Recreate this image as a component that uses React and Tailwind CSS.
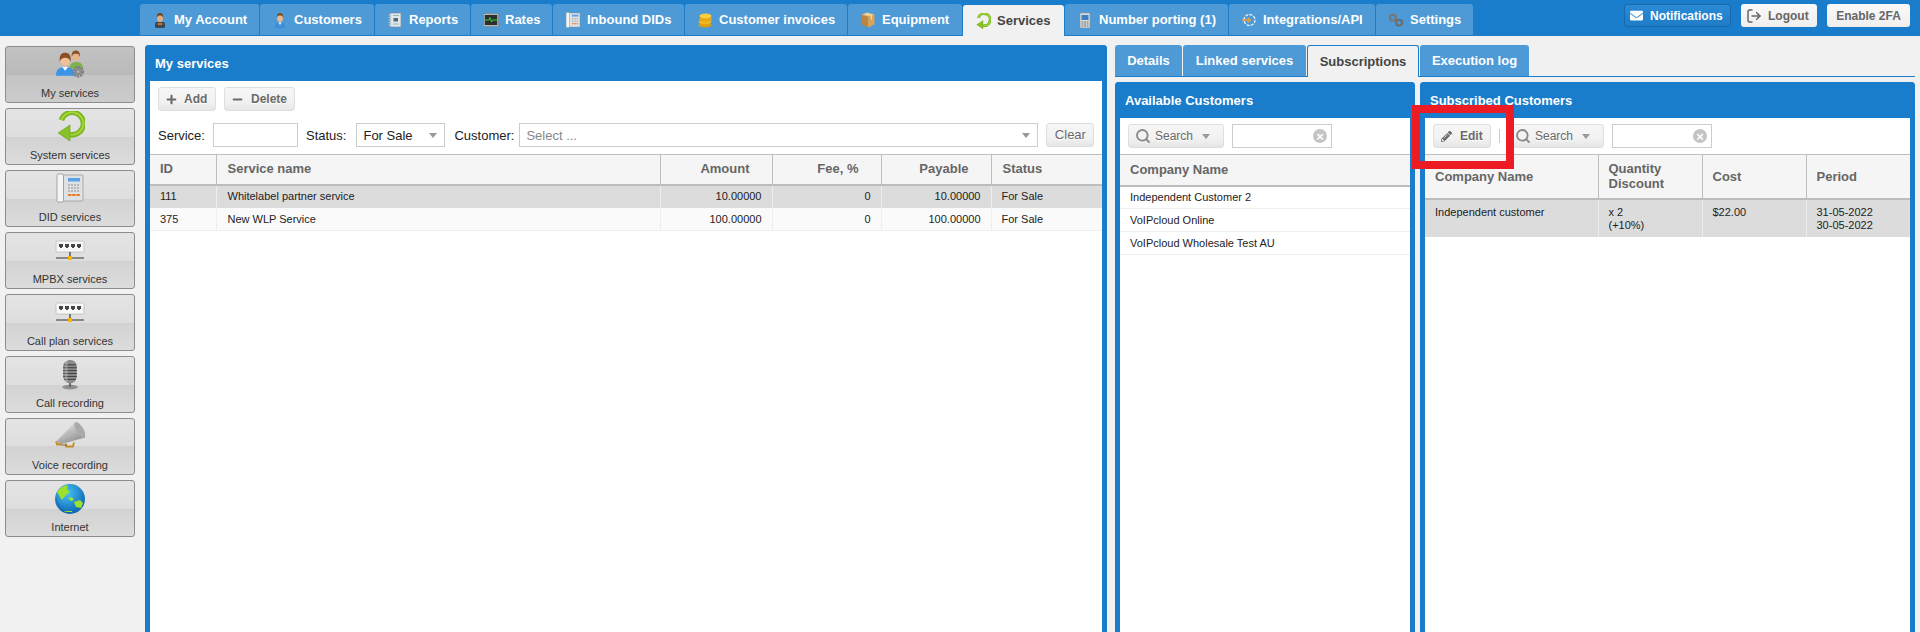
import { Search, LogOut } from "lucide-react";
import { FaPencilAlt, FaEnvelope, FaPlus, FaMinus } from "react-icons/fa";

// ---- small drawn icons (tab bar + left menu) ----

function Person({ className, shirt = "#3f8fd8", hair = "#7a4a1e" }) {
  return (
    <svg viewBox="0 0 16 16" className={className}>
      <path d="M2.5 16c0-4 2-5.5 5.5-5.5s5.5 1.500 5.500 5.500z" fill={shirt} />
      <path d="M6.500 10.500h3L8 13z" fill="#fff" />
      <ellipse cx="8" cy="6" rx="3" ry="4" fill="#e9b88e" />
      <path d="M4.800 6C4.500 2.500 6 1 8 1s3.500 1.500 3.200 5c-.5-2-1.700-2.500-3.200-2.500S5.300 4 4.800 6z" fill={hair} />
    </svg>
  );
}

function Account({ className }) {
  return (
    <svg viewBox="0 0 16 16" className={className}>
      <rect x="3" y="10" width="10" height="6" rx="1.500" fill="#3b4a57" />
      <rect x="6" y="11" width="4" height="2" fill="#d9702a" />
      <ellipse cx="8" cy="6" rx="3" ry="4" fill="#e3ad80" />
      <path d="M4.800 6C4.500 2.500 6 1 8 1s3.500 1.500 3.200 5c-.5-2-1.700-2.500-3.200-2.500S5.300 4 4.800 6z" fill="#6d4218" />
    </svg>
  );
}

function Notebook({ className }) {
  return (
    <svg viewBox="0 0 16 16" className={className}>
      <rect x="3" y="1" width="11" height="14" fill="#dfe8ef" stroke="#7d8d99" strokeWidth=".7" />
      <rect x="6.500" y="6" width="4.500" height="3.500" fill="#55666f" />
      <path d="M6 3.500h6M6 12h6" stroke="#8aa" strokeWidth=".8" />
      <path d="M1.500 3h3M1.500 5.500h3M1.500 8h3M1.500 10.500h3M1.500 13h3" stroke="#ccc" strokeWidth=".9" />
    </svg>
  );
}

function Monitor({ className }) {
  return (
    <svg viewBox="0 0 16 16" className={className}>
      <rect x=".5" y="1.500" width="15" height="13" fill="#b5b9ba" stroke="#777" strokeWidth=".5" />
      <rect x="1.800" y="3" width="12.400" height="10" fill="#2c2f2e" />
      <path d="M2 8h4l1-2.500L8.500 10l1-2h4.500" fill="none" stroke="#3ddc4a" strokeWidth=".9" />
    </svg>
  );
}

function DeskPhone({ className }) {
  return (
    <svg viewBox="0 0 28 30" className={className}>
      <rect x="7" y="2" width="20" height="26" rx="1" fill="#dfe2e4" stroke="#8f9497" strokeWidth=".7" />
      <rect x="1" y="1" width="6.500" height="28" rx="1.500" fill="#f4f5f5" stroke="#8f9497" strokeWidth=".8" />
      <rect x="12" y="5" width="12" height="3.500" fill="#5ea2e6" />
      <path d="M12 12h12M12 15h12M12 18h12" stroke="#a7aaac" strokeWidth="1.500" strokeDasharray="2 1" />
      <path d="M12 22h12" stroke="#e87c2c" strokeWidth="2" strokeDasharray="3.500 .7" />
    </svg>
  );
}

function Coins({ className }) {
  return (
    <svg viewBox="0 0 16 16" className={className}>
      <ellipse cx="8" cy="13" rx="6.500" ry="2.500" fill="#dc9d10" />
      <ellipse cx="8" cy="10" rx="6.500" ry="2.500" fill="#f0b71c" />
      <ellipse cx="8.500" cy="7" rx="6.500" ry="2.500" fill="#e6a812" />
      <ellipse cx="8.500" cy="4" rx="6" ry="2.500" fill="#fbcf3a" />
    </svg>
  );
}

function Box({ className }) {
  return (
    <svg viewBox="0 0 16 16" className={className}>
      <path d="M8 4L1.500 2.500v10L8 15.500z" fill="#b9853f" />
      <path d="M8 4l6.500-1.500v10L8 15.500z" fill="#d6a45c" />
      <path d="M1.500 2.500L8 .5l6.500 2L8 4.500z" fill="#e9c182" />
      <path d="M5 1.500L11.500 3.500v4" stroke="#f2dcb0" strokeWidth="1.200" fill="none" />
    </svg>
  );
}

function GreenArrow({ className }) {
  return (
    <svg viewBox="0 0 28 28" className={className}>
      <path d="M6 8.500A10.500 10.500 0 1 1 14 22" fill="none" stroke="#7ab51d" strokeWidth="5" />
      <path d="M6 8.500A10.500 10.500 0 1 1 14 22" fill="none" stroke="#a4d33c" strokeWidth="2" />
      <path d="M3 20.500L14 13v15z" fill="#86c126" stroke="#6aa015" strokeWidth=".6" />
    </svg>
  );
}

function Mobile({ className }) {
  return (
    <svg viewBox="0 0 16 16" className={className}>
      <rect x="3" y="1" width="10" height="15" rx="1" fill="#d9dcdc" stroke="#8d9191" strokeWidth=".6" />
      <rect x="4.500" y="3" width="7" height="5" fill="#3f7fc4" />
      <path d="M4.500 10h7M4.500 12h7M4.500 14h7" stroke="#777" strokeWidth="1.100" strokeDasharray="2 .6" />
    </svg>
  );
}

function GearArrow({ className }) {
  return (
    <svg viewBox="0 0 16 16" className={className}>
      <circle cx="8.500" cy="8" r="5.500" fill="none" stroke="#e8f1f8" strokeWidth="1.300" strokeDasharray="3 1.200" />
      <path d="M1 8h8M6.500 5.500L9.500 8l-3 2.500" fill="none" stroke="#e2a14a" strokeWidth="1.400" />
    </svg>
  );
}

function Gears({ className }) {
  return (
    <svg viewBox="0 0 18 16" className={className}>
      <circle cx="5.500" cy="5.500" r="3.300" fill="none" stroke="#777" strokeWidth="2.400" />
      <circle cx="12.500" cy="11" r="3.300" fill="none" stroke="#6c6c6c" strokeWidth="2.400" />
    </svg>
  );
}

function TwoUsers({ className }) {
  return (
    <svg viewBox="0 0 32 30" className={className}>
      <path d="M15 20c0-5 3-7 7-7s7 2 7 7z" fill="#7fb04a" />
      <ellipse cx="21.500" cy="7" rx="4" ry="5" fill="#e7b48a" />
      <path d="M17.200 8C16.800 3 19 1 21.500 1s4.700 2 4.300 7c-.6-3-2.400-3.500-4.300-3.500S17.800 5 17.200 8z" fill="#8b4d22" />
      <path d="M1 27c0-7 4-9 9.500-9s9.500 2 9.500 9z" fill="#3d93e6" />
      <path d="M7.500 18h6L10.500 22z" fill="#fff" />
      <ellipse cx="10.500" cy="11" rx="5" ry="6" fill="#f0c098" />
      <path d="M5 13C4 6 7 3.500 10.500 3.500S17 6 16 13c-.7-3.500-3-4.500-5.500-4.500S5.700 9.500 5 13z" fill="#8b4d22" />
      <circle cx="24" cy="23" r="4.300" fill="none" stroke="#7d7f81" strokeWidth="3.400" strokeDasharray="2 .8" />
      <circle cx="24" cy="23" r="2.400" fill="none" stroke="#8a8c8e" strokeWidth="2.400" />
    </svg>
  );
}

function NetSwitch({ className }) {
  return (
    <svg viewBox="0 0 30 22" className={className}>
      <rect x="1" y="1" width="28" height="11" rx="1" fill="#f7f7f7" stroke="#bdbdbd" strokeWidth=".8" />
      <path d="M4 4h4v3H7v1H5V7H4zM10 4h4v3h-1v1h-2V7h-1zM16 4h4v3h-1v1h-2V7h-1zM22 4h4v3h-1v1h-2V7h-1z" fill="#444" />
      <path d="M15 12v6M1 18h28" stroke="#333" strokeWidth="1.200" />
      <rect x="13" y="16" width="4" height="4" fill="#f4b400" />
    </svg>
  );
}

function Mic({ className }) {
  return (
    <svg viewBox="0 0 18 32" className={className}>
      <ellipse cx="9" cy="29" rx="8" ry="2.500" fill="#8f8f8f" />
      <rect x="8" y="24" width="2" height="5" fill="#666" />
      <rect x="2" y="1" width="14" height="24" rx="6.500" fill="#8b8b8b" />
      <path d="M3 6h12M2 9h14M2 12h14M2 15h14M2 18h14M3 21h12" stroke="#3c3c3c" strokeWidth="1" />
      <rect x="3.500" y="1" width="3" height="23" fill="#fff" opacity=".25" />
    </svg>
  );
}

function Megaphone({ className }) {
  return (
    <svg viewBox="0 0 30 26" className={className}>
      <defs>
        <linearGradient id="cone" x1="0" y1="0" x2=".6" y2="1">
          <stop offset="0" stopColor="#f2f2f2" />
          <stop offset="1" stopColor="#8e8e8e" />
        </linearGradient>
      </defs>
      <path d="M1 20L20 1l10 15L5 23z" fill="url(#cone)" />
      <ellipse cx="25" cy="8.500" rx="9" ry="3.500" transform="rotate(58 25 8.500)" fill="#a9a9a9" />
      <path d="M1 20l1 3h5M11 22v3h7l1-4" fill="none" stroke="#c58b2a" strokeWidth="1.800" />
      <path d="M7 23.500h5" stroke="#8a5f18" strokeWidth="1" />
    </svg>
  );
}

function Globe({ className }) {
  return (
    <svg viewBox="0 0 32 32" className={className}>
      <defs>
        <radialGradient id="sea" cx="40%" cy="30%" r="75%">
          <stop offset="0" stopColor="#45c3f5" />
          <stop offset="1" stopColor="#0c5fae" />
        </radialGradient>
      </defs>
      <circle cx="16" cy="16" r="15" fill="url(#sea)" />
      <path d="M3 9c3-4 7-7 11-7l-1 4 3 3-4 3-4 5-2-3zM14 15l4-1 2 3-3 1zM20 19l6-2 3 3-2 5-5-1zM10 28h8v1h-8z" fill="#9be12e" />
      <path d="M2 15c1 8 7 15 14 15" fill="none" stroke="#0a4a8c" strokeWidth="1" opacity=".5" />
    </svg>
  );
}

function Caret({ className = "" }) {
  return <span className={`w-0 h-0 border-x-[4px] border-x-transparent border-t-[5px] border-t-[#999] ${className}`} />;
}

const tabs = [
  { label: "My Account", w: "w-[119px]", Icon: Account },
  { label: "Customers", w: "w-[114px]", Icon: Person },
  { label: "Reports", w: "w-[95px]", Icon: Notebook },
  { label: "Rates", w: "w-[81px]", Icon: Monitor },
  { label: "Inbound DIDs", w: "w-[131px]", Icon: DeskPhone },
  { label: "Customer invoices", w: "w-[162px]", Icon: Coins },
  { label: "Equipment", w: "w-[114px]", Icon: Box },
  { label: "Services", w: "w-[101px]", Icon: GreenArrow, active: true },
  { label: "Number porting (1)", w: "w-[163px]", Icon: Mobile },
  { label: "Integrations/API", w: "w-[146px]", Icon: GearArrow },
  { label: "Settings", w: "w-[97px]", Icon: Gears },
];

const menu = [
  { label: "My services", icon: <TwoUsers className="w-[31px] h-[30px]" />, active: true },
  { label: "System services", icon: <GreenArrow className="w-[30px] h-[30px]" /> },
  { label: "DID services", icon: <DeskPhone className="w-[28px] h-[30px]" /> },
  { label: "MPBX services", icon: <NetSwitch className="w-[30px] h-[22px] mt-[5px]" /> },
  { label: "Call plan services", icon: <NetSwitch className="w-[30px] h-[22px] mt-[5px]" /> },
  { label: "Call recording", icon: <Mic className="w-[18px] h-[31px]" /> },
  { label: "Voice recording", icon: <Megaphone className="w-[30px] h-[27px]" /> },
  { label: "Internet", icon: <Globe className="w-[32px] h-[32px]" /> },
];

const btn =
  "flex items-center h-6 border border-[#dedede] rounded-[3px] bg-[linear-gradient(#f6f6f6,#f2f2f2_60%,#e6e6e6)] text-[12px] font-bold text-[#6a6a6a] [text-shadow:0_1px_0_#fff]";
const thBase = "border-r border-[#bdbdbd] last:border-r-0 text-[13px] font-bold text-[#666] text-left pl-[10px] align-middle";
const th = `h-[30px] pb-[2px] ${thBase}`;
const thNum = "h-[30px] pb-[2px] border-r border-[#bdbdbd] text-[13px] font-bold text-[#666] text-right pr-[22px] align-middle";
const td = "border-r border-[#eeeeee] last:border-r-0 pl-[10px] align-middle";
const tdNum = "border-r border-[#eeeeee] pr-[10px] text-right align-middle";

function Panel({ title, className = "", children }) {
  return (
    <div className={`flex flex-col rounded-t-[4px] border-x-[5px] border-t-[5px] border-[#197dcb] bg-[#197dcb] ${className}`}>
      <div className="h-[31px] text-[13px] font-bold text-white pl-[5px] pt-[5px] leading-[18px]">{title}</div>
      <div className="flex-1 bg-white">{children}</div>
    </div>
  );
}

function SearchBox() {
  return (
    <>
      <button className={`${btn} w-[96px] pl-[6px]`}>
        <Search className="w-4 h-4 text-[#888] mr-[4px]" strokeWidth={2.750} />
        <span className="font-normal">Search</span>
        <Caret className="ml-[9px]" />
      </button>
      <div className="flex items-center justify-end w-[100px] h-6 ml-2 border border-[#cccccc] pr-[4px]">
        <span className="flex items-center justify-center w-[14px] h-[14px] rounded-full bg-[#c4c4c4] text-white text-[13px] leading-none font-bold">×</span>
      </div>
    </>
  );
}

export default function App() {
  return (
    <div className="relative w-[1920px] h-[632px] overflow-hidden bg-[#f1f1f1] font-['Liberation_Sans',Arial,sans-serif]">
      {/* トップのタブ */}
      <div className="flex h-9 bg-[#197dcb] pl-[140px] pt-1">
        {tabs.map(({ label, w, Icon, active }) => (
          <div
            key={label}
            className={`flex items-center shrink-0 pl-3 mr-px rounded-t-[3px] text-[13px] font-bold ${w} ${
              active ? "h-[31px] mt-px bg-[#f1f1f1] text-[#444]" : "h-[31px] bg-[#4d9ad6] text-white"
            }`}
          >
            <Icon className="w-4 h-4 mr-[6px] shrink-0" />
            {label}
          </div>
        ))}
        <div className="ml-auto flex gap-[10px] pr-[10px]">
          <button className="flex items-center gap-[6px] w-[107px] h-[23px] pl-[4px] rounded-[3px] border border-[#1769ab] bg-[linear-gradient(#2b8ad6,#1f7dc8)] text-white text-[12px] font-bold">
            <FaEnvelope className="w-[15px] h-[13px]" />
            Notifications
          </button>
          <button className="flex items-center gap-[6px] w-[76px] h-[23px] pl-[5px] rounded-[3px] bg-[linear-gradient(#fafafa,#eeeeee)] text-[#666] text-[12px] font-bold">
            <LogOut className="w-[16px] h-[16px]" strokeWidth={2.250} />
            Logout
          </button>
          <button className="w-[83px] h-[23px] rounded-[3px] bg-[linear-gradient(#fafafa,#eeeeee)] text-[#666] text-[12px] font-bold">
            Enable 2FA
          </button>
        </div>
      </div>

      <div className="flex h-[596px] pt-[9px]">
        {/* 左メニュー */}
        <div className="flex flex-col gap-[5px] w-[145px] shrink-0 pl-[5px] pt-px">
          {menu.map((m) => (
            <div
              key={m.label}
              className={`flex flex-col items-center w-[130px] h-[57px] shrink-0 rounded-[3px] border border-[#8c8c8c] ${
                m.active
                  ? "bg-[linear-gradient(#c2c2c2,#bababa_50%,#c4c4c4_50%,#cccccc)]"
                  : "bg-[linear-gradient(#e4e4e4,#dedede_50%,#d2d2d2_50%,#dcdcdc)]"
              }`}
            >
              <div className="flex items-start justify-center h-[39px] pt-[2px] shrink-0">{m.icon}</div>
              <div className="text-[11px] leading-[14px] text-[#333]">{m.label}</div>
            </div>
          ))}
        </div>

        {/* My services */}
        <Panel title="My services" className="w-[962px] shrink-0">
          <div className="flex gap-2 pl-2 pt-[6px]">
            <button className={`${btn} w-[58px] pl-[7px]`}>
              <FaPlus className="w-[11px] h-[11px] mr-[7px]" />
              Add
            </button>
            <button className={`${btn} w-[71px] pl-[7px]`}>
              <FaMinus className="w-[11px] h-[11px] mr-[8px]" />
              Delete
            </button>
          </div>
          <div className="flex items-center h-6 mt-3 pl-2 text-[13px] text-[#222]">
            <span className="pt-[2px]">Service:</span>
            <div className="w-[85px] h-6 ml-[8px] border border-[#cccccc]" />
            <span className="ml-2 pt-[2px]">Status:</span>
            <div className="flex items-center justify-between w-[89px] h-6 ml-[10px] pl-[6px] pr-[7px] border border-[#cccccc]">
              <span className="pt-[2px]">For Sale</span>
              <Caret />
            </div>
            <span className="ml-[9px] pt-[2px]">Customer:</span>
            <div className="flex items-center justify-between w-[519px] h-6 ml-[5px] pl-[6px] pr-[7px] border border-[#cccccc] text-[#888]">
              <span className="pt-[2px]">Select ...</span>
              <Caret />
            </div>
            <button className={`${btn} justify-center w-[48px] ml-2 font-normal text-[13px]`}>Clear</button>
          </div>
          <table className="w-full table-fixed mt-[7px] text-[11px] text-[#222]">
            <colgroup>
              <col className="w-[66px]" />
              <col className="w-[444px]" />
              <col className="w-[112px]" />
              <col className="w-[109px]" />
              <col className="w-[110px]" />
              <col className="w-[111px]" />
            </colgroup>
            <thead>
              <tr className="bg-[#f5f5f5] border-t border-b-2 border-[#bdbdbd]">
                <th className={th}>ID</th>
                <th className={`${th} pl-[11px]`}>Service name</th>
                <th className={thNum}>Amount</th>
                <th className={thNum}>Fee, %</th>
                <th className={thNum}>Payable</th>
                <th className={`${th} pl-[11px]`}>Status</th>
              </tr>
            </thead>
            <tbody>
              <tr className="h-[23px] bg-[#dcdcdc]">
                <td className={td}>111</td>
                <td className={`${td} pl-[11px]`}>Whitelabel partner service</td>
                <td className={tdNum}>10.00000</td>
                <td className={tdNum}>0</td>
                <td className={tdNum}>10.00000</td>
                <td className={td}>For Sale</td>
              </tr>
              <tr className="h-[23px] bg-[#fafafa] border-b border-[#eeeeee]">
                <td className={td}>375</td>
                <td className={`${td} pl-[11px]`}>New WLP Service</td>
                <td className={tdNum}>100.00000</td>
                <td className={tdNum}>0</td>
                <td className={tdNum}>100.00000</td>
                <td className={td}>For Sale</td>
              </tr>
            </tbody>
          </table>
        </Panel>

        {/* 右側 */}
        <div className="w-[800px] ml-2 shrink-0 flex flex-col">
          <div className="flex h-[32px] border-b border-[#197dcb] text-[13px] font-bold">
            <div className="flex items-center justify-center w-[67px] h-[31px] mr-px rounded-t-[3px] bg-[#4d9ad6] text-white">Details</div>
            <div className="flex items-center justify-center w-[123px] h-[31px] mr-px rounded-t-[3px] bg-[#4d9ad6] text-white">Linked services</div>
            <div className="flex items-center justify-center w-[112px] h-[32px] mr-px rounded-t-[3px] border border-b-0 border-[#197dcb] bg-[#f1f1f1] text-[#444]">Subscriptions</div>
            <div className="flex items-center justify-center w-[109px] h-[31px] rounded-t-[3px] bg-[#4d9ad6] text-white">Execution log</div>
          </div>
          <div className="flex flex-1 gap-[5px] mt-[5px]">
            <Panel title="Available Customers" className="w-[300px] shrink-0">
              <div className="flex items-center h-6 mt-[6px] mb-[6px] pl-2">
                <SearchBox />
              </div>
              <table className="w-full text-[11px] text-[#222]">
                <thead>
                  <tr className="bg-[#f5f5f5] border-t border-b-2 border-[#bdbdbd]">
                    <th className={`h-[31px] pb-[1px] ${thBase}`}>Company Name</th>
                  </tr>
                </thead>
                <tbody>
                  {["Independent Customer 2", "VoIPcloud Online", "VoIPcloud Wholesale Test AU"].map((c) => (
                    <tr key={c} className="h-[23px] border-b border-[#eeeeee]">
                      <td className={td}>{c}</td>
                    </tr>
                  ))}
                </tbody>
              </table>
            </Panel>
            <Panel title="Subscribed Customers" className="w-[495px] shrink-0">
              <div className="flex items-center h-6 mt-[6px] mb-[6px] pl-2">
                <button className={`${btn} w-[58px] pl-[7px] mr-2`}>
                  <FaPencilAlt className="w-[11px] h-[11px] mr-[8px]" />
                  Edit
                </button>
                <span className="w-px h-[14px] bg-[#cccccc] mr-[8px]" />
                <SearchBox />
              </div>
              <table className="w-full table-fixed text-[11px] text-[#222]">
                <colgroup>
                  <col className="w-[173px]" />
                  <col className="w-[104px]" />
                  <col className="w-[104px]" />
                  <col className="w-[104px]" />
                </colgroup>
                <thead>
                  <tr className="bg-[#f5f5f5] border-t border-b-2 border-[#bdbdbd]">
                    <th className={`h-[44px] ${thBase}`}>Company Name</th>
                    <th className={`h-[44px] leading-[15px] ${thBase}`}>Quantity<br />Discount</th>
                    <th className={`h-[44px] ${thBase}`}>Cost</th>
                    <th className={`h-[44px] ${thBase}`}>Period</th>
                  </tr>
                </thead>
                <tbody>
                  <tr className="bg-[#dcdcdc] leading-[13px]">
                    <td className="border-r border-[#eeeeee] pl-[10px] pt-[6px] pb-[5px] align-top">Independent customer</td>
                    <td className="border-r border-[#eeeeee] pl-[10px] pt-[6px] pb-[5px] align-top">x 2<br />(+10%)</td>
                    <td className="border-r border-[#eeeeee] pl-[10px] pt-[6px] pb-[5px] align-top">$22.00</td>
                    <td className="pl-[10px] pt-[6px] pb-[5px] align-top">31-05-2022<br />30-05-2022</td>
                  </tr>
                </tbody>
              </table>
            </Panel>
          </div>
        </div>
      </div>

      {/* 赤い枠の注釈 */}
      <div className="absolute left-[1412px] top-[105px] w-[102px] h-[64px] border-[8px] border-[#ed1c24]" />
    </div>
  );
}
